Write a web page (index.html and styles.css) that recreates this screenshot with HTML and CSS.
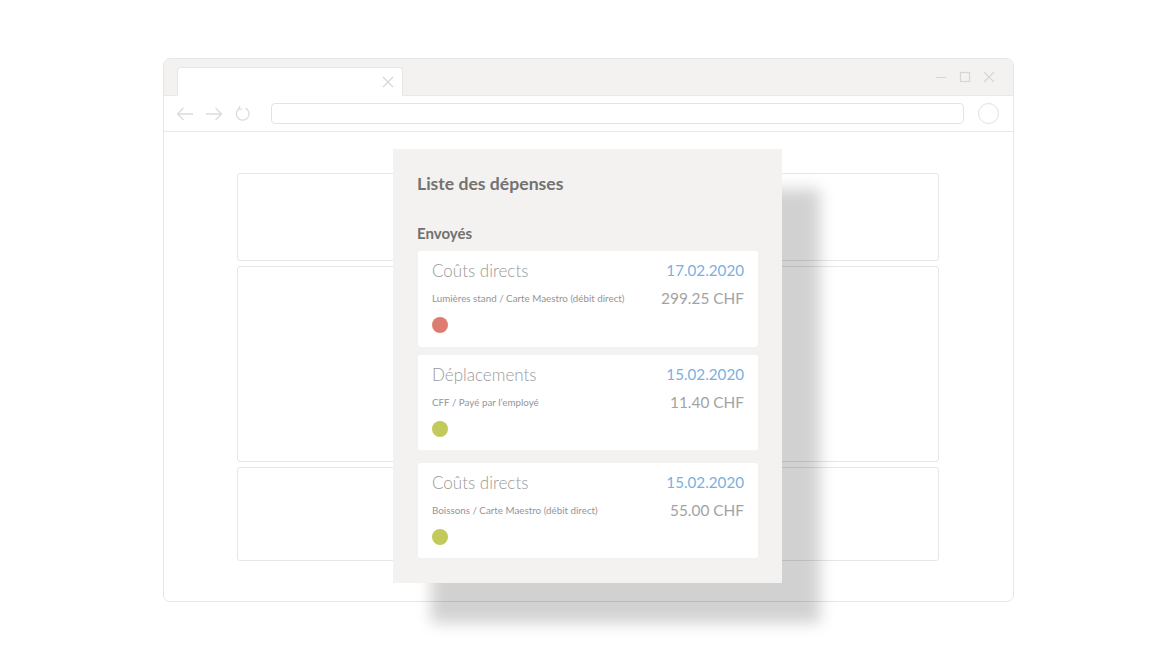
FILE: index.html
```html
<!DOCTYPE html>
<html lang="fr">
<head>
<meta charset="utf-8">
<title>Liste des dépenses</title>
<link rel="stylesheet" href="styles.css">
</head>
<body>
<div class="stage">
  <div class="browser">
    <div class="tabbar">
      <div class="tab">
        <svg class="tab-close" width="12" height="12" viewBox="0 0 12 12"><path d="M1 1L11 11M11 1L1 11" stroke="#d6d6d6" stroke-width="1.2" fill="none"/></svg>
      </div>
      <div class="winctrl">
        <svg width="12" height="12" viewBox="0 0 12 12"><path d="M1 6.5H11" stroke="#d6d6d6" stroke-width="1.2"/></svg>
        <svg width="12" height="12" viewBox="0 0 12 12"><rect x="1.5" y="1.5" width="9" height="9" stroke="#d6d6d6" stroke-width="1.2" fill="none"/></svg>
        <svg width="12" height="12" viewBox="0 0 12 12"><path d="M1 1L11 11M11 1L1 11" stroke="#d6d6d6" stroke-width="1.2" fill="none"/></svg>
      </div>
    </div>
    <div class="toolbar">
      <div class="navs">
        <svg width="18" height="14" viewBox="0 0 18 14"><path d="M17 7H1.5M7.5 1L1.5 7L7.5 13" stroke="#dcdcdc" stroke-width="1.3" fill="none"/></svg>
        <svg width="18" height="14" viewBox="0 0 18 14"><path d="M1 7H16.5M10.5 1L16.5 7L10.5 13" stroke="#dcdcdc" stroke-width="1.3" fill="none"/></svg>
        <svg width="16" height="17" viewBox="0 0 16 17"><path d="M10.5 3.2A6.3 6.3 0 1 1 4.2 3.6" stroke="#dcdcdc" stroke-width="1.3" fill="none"/><path d="M4.8 0.8L4.2 3.8L7.2 4.4" stroke="#dcdcdc" stroke-width="1.3" fill="none"/></svg>
      </div>
      <div class="address"></div>
      <div class="avatar"></div>
    </div>
    <div class="content">
      <div class="ph ph-a"></div>
      <div class="ph ph-b"></div>
      <div class="ph ph-c"></div>
    </div>
  </div>

  <div class="panel">
    <h1 class="panel-title">Liste des dépenses</h1>
    <h2 class="section-title">Envoyés</h2>
    <div class="card">
      <div class="row"><span class="cat">Coûts directs</span><span class="date">17.02.2020</span></div>
      <div class="row row2"><span class="desc">Lumières stand / Carte Maestro (débit direct)</span><span class="amount">299.25 CHF</span></div>
      <div class="dot dot-red"></div>
    </div>
    <div class="card card-2">
      <div class="row"><span class="cat">Déplacements</span><span class="date">15.02.2020</span></div>
      <div class="row row2"><span class="desc">CFF / Payé par l’employé</span><span class="amount">11.40 CHF</span></div>
      <div class="dot dot-green"></div>
    </div>
    <div class="card card-3">
      <div class="row"><span class="cat">Coûts directs</span><span class="date">15.02.2020</span></div>
      <div class="row row2"><span class="desc">Boissons / Carte Maestro (débit direct)</span><span class="amount">55.00 CHF</span></div>
      <div class="dot dot-green"></div>
    </div>
  </div>
</div>
</body>
</html>
```

FILE: styles.css
```css
* { box-sizing: border-box; }
html, body { margin: 0; padding: 0; background: #fff; }
body { width: 1176px; height: 660px; overflow: hidden; font-family: Lato, "Open Sans", sans-serif; }

.stage { position: relative; width: 1176px; height: 660px; padding: 58px 0 0 163px; }

.browser {
  width: 851px; height: 544px;
  border: 1px solid #e6e6e6; border-radius: 7px;
  overflow: hidden; background: #fff;
  display: flex; flex-direction: column;
}
.tabbar {
  height: 37px; flex: none; background: #f3f2f0;
  border-bottom: 1px solid #e9e8e6;
  display: flex; align-items: flex-end; justify-content: space-between;
  padding-left: 13px;
}
.tab {
  width: 226px; height: 29px; margin-bottom: -1px;
  background: #fff; border: 1px solid #e6e6e6; border-bottom: none;
  border-radius: 4px 4px 0 0;
  display: flex; align-items: center; justify-content: flex-end;
  padding-right: 8px; padding-bottom: 1px;
}
.winctrl { align-self: flex-start; display: flex; gap: 12px; padding: 12px 18px 0 0; }

.toolbar {
  height: 36px; flex: none; border-bottom: 1px solid #e9e8e6;
  display: flex; align-items: center; padding: 0 14px 0 12px;
}
.navs { display: flex; align-items: center; gap: 11px; width: 95px; }
.navs svg:last-child { margin-left: 1px; }
.address { width: 693px; height: 21px; border: 1px solid #e3e3e3; border-radius: 4px; }
.avatar { width: 21px; height: 21px; border: 1px solid #e0e0e0; border-radius: 50%; margin-left: auto; }

.content { flex: 1; padding: 41px 0 0 73px; display: flex; flex-direction: column; gap: 5px; }
.ph { width: 702px; border: 1px solid #e6e6e6; border-radius: 3px; }
.ph-a { height: 88px; }
.ph-b { height: 196px; }
.ph-c { height: 94px; }

.panel {
  position: absolute; left: 393px; top: 149px;
  width: 389px; height: 434px;
  background: #f3f2f0;
  box-shadow: 38px 40px 14px rgba(0, 0, 0, 0.18);
  padding: 24px 24px 0 25px;
}
.panel-title { margin: 0 0 0 -1px; font-size: 17.6px; line-height: 22px; font-weight: 700; color: #727272; }
.section-title { margin: 28px 0 0 -1px; font-size: 15px; line-height: 20px; font-weight: 700; color: #707070; }

.card {
  margin-top: 8px; height: 96px; background: #fff; border-radius: 3px;
  padding: 8px 14px 0 14px;
}
.card-2 { margin-top: 8px; height: 95px; }
.card-3 { margin-top: 13px; height: 95px; }
.row { display: flex; justify-content: space-between; align-items: center; height: 22px; }
.row2 { margin-top: 6px; }
.cat { font-size: 17px; font-weight: 300; color: #999; }
.date { font-size: 15.2px; font-weight: 400; color: #7bb0de; }
.desc { font-size: 9.8px; color: #959595; }
.amount { font-size: 15.4px; font-weight: 400; color: #a3a3a3; }
.dot { width: 16px; height: 16px; border-radius: 50%; margin-top: 8px; }
.dot-red { background: #df7c71; }
.dot-green { background: #c3c95b; }
```
